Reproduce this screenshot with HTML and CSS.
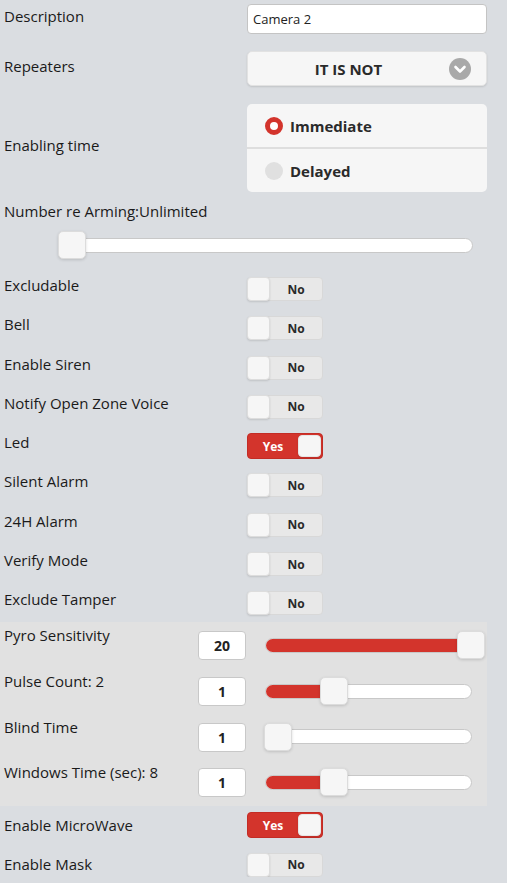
FILE: index.html
```html
<!DOCTYPE html>
<html>
<head>
<meta charset="utf-8">
<link rel="stylesheet" href="styles.css">
</head>
<body>
<div class="page">
  <div class="row row-desc">
    <div class="lbl">Description</div>
    <div class="text-input">Camera 2</div>
  </div>
  <div class="row row-rep">
    <div class="lbl">Repeaters</div>
    <div class="select">
      <span class="select-text">IT IS NOT</span>
      <span class="select-icon">
        <svg width="22" height="22" viewBox="0 0 22 22"><circle cx="11" cy="11" r="11" fill="#a9a9a9"/><path d="M6.5 9 L11 13.5 L15.5 9" fill="none" stroke="#fff" stroke-width="2.6" stroke-linecap="round" stroke-linejoin="round"/></svg>
      </span>
    </div>
  </div>
  <div class="row row-enab">
    <div class="lbl">Enabling time</div>
    <div class="radio-group">
      <div class="radio-item"><span class="radio on"></span><span>Immediate</span></div>
      <div class="radio-item"><span class="radio"></span><span>Delayed</span></div>
    </div>
  </div>
  <div class="lbl-block">Number re Arming:Unlimited</div>
  <div class="arming">
    <div class="slider wide">
      <div class="track"></div>
      <div class="thumb" style="left:0px"></div>
    </div>
  </div>

  <div class="row trow first"><div class="lbl">Excludable</div><div class="toggle"><span class="handle"></span><span class="tlabel">No</span></div></div>
  <div class="row trow"><div class="lbl">Bell</div><div class="toggle"><span class="handle"></span><span class="tlabel">No</span></div></div>
  <div class="row trow"><div class="lbl">Enable Siren</div><div class="toggle"><span class="handle"></span><span class="tlabel">No</span></div></div>
  <div class="row trow"><div class="lbl">Notify Open Zone Voice</div><div class="toggle"><span class="handle"></span><span class="tlabel">No</span></div></div>
  <div class="row trow"><div class="lbl">Led</div><div class="toggle on"><span class="tlabel">Yes</span><span class="handle"></span></div></div>
  <div class="row trow"><div class="lbl">Silent Alarm</div><div class="toggle"><span class="handle"></span><span class="tlabel">No</span></div></div>
  <div class="row trow"><div class="lbl">24H Alarm</div><div class="toggle"><span class="handle"></span><span class="tlabel">No</span></div></div>
  <div class="row trow"><div class="lbl">Verify Mode</div><div class="toggle"><span class="handle"></span><span class="tlabel">No</span></div></div>
  <div class="row trow"><div class="lbl">Exclude Tamper</div><div class="toggle"><span class="handle"></span><span class="tlabel">No</span></div></div>

  <div class="panel">
    <div class="prow">
      <div class="plbl">Pyro Sensitivity</div>
      <div class="numbox">20</div>
      <div class="slider">
        <div class="track"><div class="fill" style="width:100%"></div></div>
        <div class="thumb" style="left:192px"></div>
      </div>
    </div>
    <div class="prow">
      <div class="plbl">Pulse Count: 2</div>
      <div class="numbox">1</div>
      <div class="slider">
        <div class="track"><div class="fill" style="width:69px"></div></div>
        <div class="thumb" style="left:55px"></div>
      </div>
    </div>
    <div class="prow">
      <div class="plbl">Blind Time</div>
      <div class="numbox">1</div>
      <div class="slider">
        <div class="track"></div>
        <div class="thumb" style="left:-1px"></div>
      </div>
    </div>
    <div class="prow">
      <div class="plbl">Windows Time (sec): 8</div>
      <div class="numbox">1</div>
      <div class="slider">
        <div class="track"><div class="fill" style="width:69px"></div></div>
        <div class="thumb" style="left:55px"></div>
      </div>
    </div>
  </div>

  <div class="row trow after-panel"><div class="lbl">Enable MicroWave</div><div class="toggle on"><span class="tlabel">Yes</span><span class="handle"></span></div></div>
  <div class="row trow bottom"><div class="lbl">Enable Mask</div><div class="toggle"><span class="handle"></span><span class="tlabel">No</span></div></div>
</div>
</body>
</html>
```

FILE: styles.css
```css
html, body {
  margin: 0;
  padding: 0;
}
body {
  background: #dadde1;
  font-family: "Open Sans", "Noto Sans", sans-serif;
  font-size: 15px;
  color: #1a1a1a;
}
.page {
  width: 487px;
  padding-top: 4px;
  display: flex;
  flex-direction: column;
}
.row {
  display: flex;
  align-items: center;
}
.lbl {
  flex: 0 0 247px;
  box-sizing: border-box;
  padding-left: 4px;
  line-height: 20px;
  padding-bottom: 6px;
}
.row-desc { height: 30px; }
.row-rep { height: 35px; margin-top: 17px; }
.row-enab { height: 88px; margin-top: 18px; }

.text-input {
  box-sizing: border-box;
  width: 240px;
  height: 30px;
  background: #fff;
  border: 1px solid #c4c4c4;
  border-radius: 4px;
  font-size: 13px;
  line-height: 28px;
  padding-left: 5px;
  color: #222;
}
.select {
  box-sizing: border-box;
  width: 240px;
  height: 35px;
  background: #f6f6f6;
  border: 1px solid #e2e2e2;
  border-radius: 5px;
  box-shadow: 0 1px 2px rgba(0,0,0,0.12);
  display: flex;
  align-items: center;
  padding-right: 15px;
}
.select-text {
  flex: 1;
  text-align: center;
  font-weight: 700;
  color: #2a2a2a;
}
.select-icon {
  display: flex;
}
.radio-group {
  width: 240px;
  height: 88px;
  background: #f6f6f6;
  border-radius: 5px;
  display: flex;
  flex-direction: column;
}
.radio-item {
  flex: 1;
  display: flex;
  align-items: center;
  padding-left: 18px;
  font-weight: 700;
  color: #2a2a2a;
}
.radio-item + .radio-item {
  border-top: 2px solid #dedede;
}
.radio {
  box-sizing: border-box;
  width: 18px;
  height: 18px;
  border-radius: 50%;
  background: #e0e0e0;
  margin-right: 7px;
}
.radio.on {
  background: #fff;
  border: 5px solid #d3342c;
}
.lbl-block {
  flex: none;
  padding-left: 4px;
  line-height: 20px;
  margin-top: 9px;
}
.arming {
  margin-top: 10px;
  padding-left: 58px;
}
.slider {
  position: relative;
  height: 28px;
  width: 207px;
  display: flex;
  align-items: center;
}
.slider.wide {
  width: 415px;
}
.track {
  position: relative;
  box-sizing: border-box;
  width: 100%;
  height: 15px;
  background: #fff;
  border: 1px solid #c8c8c8;
  border-radius: 8px;
  overflow: hidden;
}
.fill {
  position: absolute;
  left: 0;
  top: 0;
  bottom: 0;
  background: #d3342c;
}
.thumb {
  position: absolute;
  top: 0;
  box-sizing: border-box;
  width: 28px;
  height: 28px;
  background: #f6f6f6;
  border: 1px solid #dcdcdc;
  border-radius: 5px;
  box-shadow: 0 1px 3px rgba(0,0,0,0.15);
}
.trow {
  height: 24px;
  margin-top: 15.3px;
}
.trow.first {
  margin-top: 18px;
}
.trow .lbl {
  padding-bottom: 8px;
}
.trow.after-panel .lbl,
.trow.bottom .lbl {
  padding-bottom: 1px;
}
.toggle {
  box-sizing: border-box;
  width: 76px;
  height: 24px;
  border-radius: 4px;
  background: #e8e8e8;
  border: 1px solid #d8d8d8;
  display: flex;
  align-items: stretch;
  font-size: 12px;
  font-weight: 700;
  color: #2a2a2a;
}
.toggle .handle {
  box-sizing: border-box;
  width: 23px;
  margin: -1px 0 -1px -1px;
  background: #f6f6f6;
  border: 1px solid #dddddd;
  border-radius: 4px;
  box-shadow: 0 1px 2px rgba(0,0,0,0.12);
}
.toggle .tlabel {
  flex: 1;
  display: flex;
  align-items: center;
  justify-content: center;
}
.toggle.on {
  height: 26px;
  background: #d3342c;
  border-color: #c32c25;
  color: #fff;
}
.toggle.on .handle {
  margin: 1px 1px 1px 0;
  border-radius: 4px;
  border-color: #e6e6e6;
}
.panel {
  margin-top: 7px;
  width: 487px;
  background: #e1e1e1;
  padding: 3px 0 9px 0;
  display: flex;
  flex-direction: column;
  gap: 10.67px;
}
.prow {
  display: flex;
  align-items: flex-start;
  height: 35px;
}
.plbl {
  flex: 0 0 198px;
  box-sizing: border-box;
  padding-left: 4px;
  line-height: 20px;
}
.numbox {
  margin-top: 6px;
  box-sizing: border-box;
  width: 48px;
  height: 29px;
  background: #fff;
  border: 1px solid #c8c8c8;
  border-radius: 4px;
  text-align: center;
  line-height: 27px;
  font-size: 14px;
  font-weight: 700;
  color: #222;
}
.prow .slider {
  margin-top: 6px;
  margin-left: 19px;
}
.after-panel {
  margin-top: 7px;
}
```
